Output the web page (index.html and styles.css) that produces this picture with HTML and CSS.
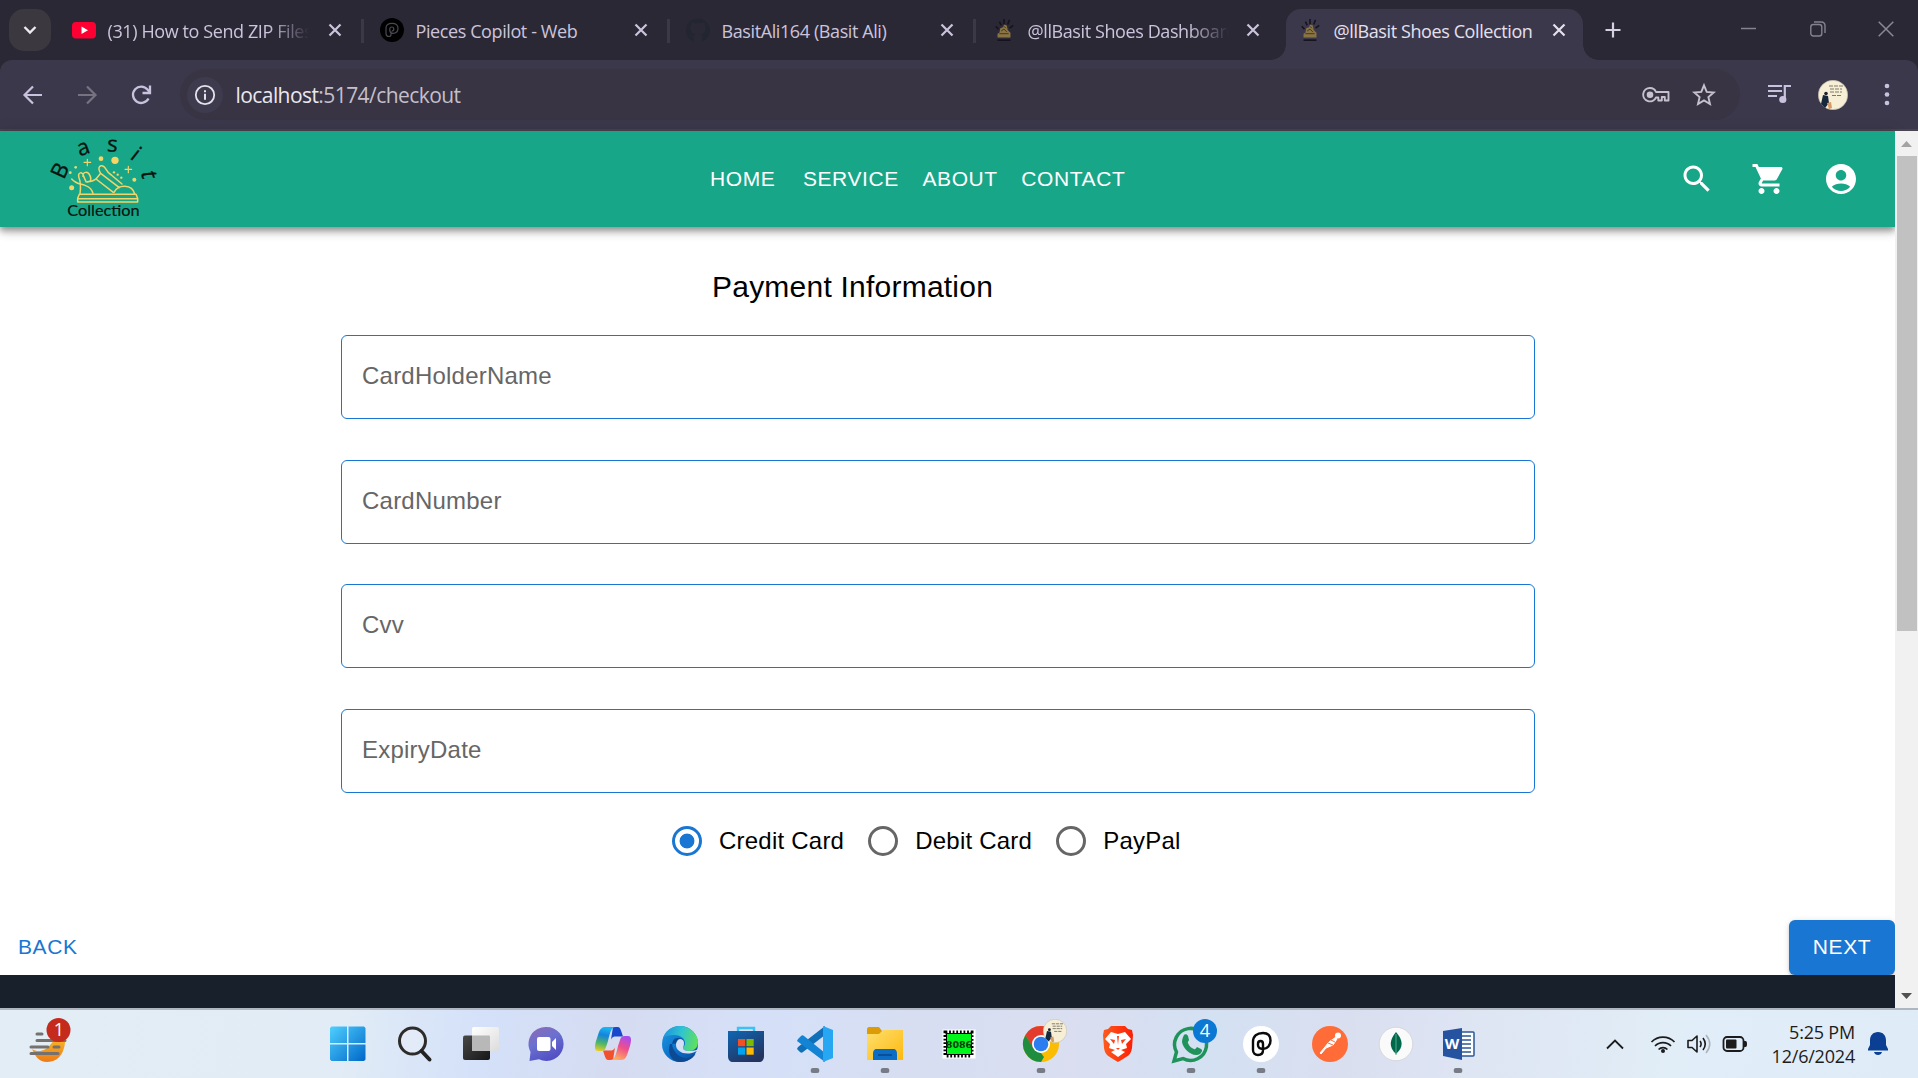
FILE: index.html
```
<!DOCTYPE html>
<html lang="en">
<head>
<meta charset="utf-8">
<title>@llBasit Shoes Collection</title>
<link rel="stylesheet" href="styles.css">
</head>
<body>
<svg width="0" height="0" class="defs" aria-hidden="true">
  <defs>
    <linearGradient id="gWin" x1="0" y1="0" x2="1" y2="1"><stop offset="0" stop-color="#4fd0ff"/><stop offset="1" stop-color="#0067c8"/></linearGradient>
    <linearGradient id="gDark" x1="0" y1="0" x2="1" y2="1"><stop offset="0" stop-color="#484848"/><stop offset="1" stop-color="#161616"/></linearGradient>
    <linearGradient id="gLight" x1="0" y1="0" x2="1" y2="1"><stop offset="0" stop-color="#fff"/><stop offset="1" stop-color="#dcdcdc"/></linearGradient>
    <linearGradient id="gChat" x1="0" y1="0" x2=".5" y2="1"><stop offset="0" stop-color="#8f6bb4"/><stop offset=".5" stop-color="#6a70d0"/><stop offset="1" stop-color="#5350c4"/></linearGradient>
    <linearGradient id="gCopA" x1=".3" y1="0" x2=".1" y2="1"><stop offset="0" stop-color="#19b4f0"/><stop offset=".3" stop-color="#1583dd"/><stop offset=".65" stop-color="#4db56a"/><stop offset="1" stop-color="#f2d020"/></linearGradient>
    <linearGradient id="gCopB" x1=".7" y1="0" x2=".3" y2="1"><stop offset="0" stop-color="#a94bf0"/><stop offset=".45" stop-color="#ee4f8a"/><stop offset="1" stop-color="#ffb15c"/></linearGradient>
    <linearGradient id="gEdgeA" x1="0" y1=".3" x2="1" y2=".5"><stop offset="0" stop-color="#1f93dc"/><stop offset=".5" stop-color="#30c4d0"/><stop offset="1" stop-color="#5fe05c"/></linearGradient>
    <linearGradient id="gEdgeB" x1="0" y1="0" x2="1" y2="1"><stop offset="0" stop-color="#1b9de2"/><stop offset=".6" stop-color="#0a69c6"/><stop offset="1" stop-color="#0b4a92"/></linearGradient>
    <linearGradient id="gStore" x1="0" y1="0" x2=".6" y2="1"><stop offset="0" stop-color="#0f66b4"/><stop offset="1" stop-color="#243460"/></linearGradient>
    <linearGradient id="gFold" x1="0" y1="0" x2="1" y2="1"><stop offset="0" stop-color="#ffdf6e"/><stop offset="1" stop-color="#fcb90f"/></linearGradient>
    <linearGradient id="gBrave" x1="0" y1="0" x2="1" y2="0"><stop offset="0" stop-color="#ff5a1c"/><stop offset="1" stop-color="#fb1f06"/></linearGradient>
    <linearGradient id="gBowl" x1="0" y1="0" x2="0" y2="1"><stop offset="0" stop-color="#f6bf28"/><stop offset="1" stop-color="#ee7a17"/></linearGradient>
    <symbol id="shoe" viewBox="0 0 26 26">
      <g fill="none" stroke="#15131c" stroke-width="1.7"><path d="M4 9l3 3M8 4l2 4M13 1v6M19 2l-2 5M23 8l-4 3"/><path d="M6 24h14"/></g>
      <path d="M6 21v-4l2-1 1-5 3-1 1-3 3 1 1 5 3 3v5z" fill="#8a7443"/><path d="M8 17h10M10 14l3-2 3 3M13 9l2 2" stroke="#3a3232" fill="none"/>
    </symbol>
    <symbol id="close" viewBox="0 0 14 14"><path d="M1.5 1.5l11 11M12.5 1.5l-11 11" stroke="currentColor" stroke-width="2.2" fill="none"/></symbol>
    <symbol id="reader" viewBox="0 0 30 30">
      <circle cx="15" cy="15" r="14.700" fill="#f6efd6" stroke="#b9b6a8" stroke-width=".6"/>
      <path d="M11 6h14M12 9h12M12 12h12M14 15.500h10" stroke="#7d786b" stroke-width="1.200" stroke-dasharray="4 1"/>
      <circle cx="8" cy="13.500" r="1.800" fill="#1c2430"/><path d="M5 15l5 1 1 7-4 5-4-4z" fill="#16283c"/><path d="M9 23l4-1 1 6-3 1z" fill="#d79a62"/>
    </symbol>
    <symbol id="dot" viewBox="0 0 9 5"><rect width="9" height="5" rx="2.500" fill="#777b86"/></symbol>
  </defs>
</svg>

<header class="tabstrip">
  <button class="tab-search"><svg width="14" height="10" viewBox="0 0 14 10"><path d="M1.500 2l5.500 5.500L12.500 2" fill="none" stroke="#eceaf2" stroke-width="2.400"/></svg></button>
  <div class="tabs">
    <div class="tab first">
      <svg class="fav" viewBox="0 0 24 24"><rect y="4" width="24" height="16.500" rx="4" fill="#ff0033"/><path d="M9.500 8.500v7.500l6.500-3.700z" fill="#fff"/></svg>
      <span class="tab-title fade">(31) How to Send ZIP Files</span><svg class="x"><use href="#close"/></svg>
    </div>
    <div class="tab">
      <svg class="fav" viewBox="0 0 24 24"><circle cx="12" cy="12" r="12" fill="#000"/><path d="M9 18.500c-2 0-3-1-3-3V10c0-3 2.500-4.700 6-4.700 3.700 0 6 1.900 6 5s-2.200 5-5.200 5c-2 0-3-1.200-3-3V11c0-1.200.8-2 2-2s2 .8 2 2-.8 2-2 2M9 18.500c1 0 2-.6 2-2v-3" fill="none" stroke="#4a4852" stroke-width="1.200"/></svg>
      <span class="tab-title">Pieces Copilot - Web</span><svg class="x"><use href="#close"/></svg>
    </div>
    <div class="tab">
      <svg class="fav" viewBox="0 0 24 24"><path d="M12 .5C5.400.5 0 5.800 0 12.400c0 5.200 3.400 9.700 8.200 11.300v-4.300c-2.500.3-3.500-.7-4-2.200l-1.300-1.500c1.200-.2 2.200.9 2.700 1.700.8.900 1.800.9 2.700.4.100-.8.500-1.500 1-1.900-2.800-.3-5-1.600-5-5.500 0-1.400.4-2.500 1.200-3.300-.3-.9-.2-2.300.2-3.200 1.500 0 2.600.9 3.300 1.400a12 12 0 016 0c.7-.5 1.800-1.400 3.300-1.400.4.900.5 2.300.2 3.200.8.800 1.200 1.900 1.200 3.300 0 3.900-2.200 5.200-5 5.500.7.600 1.100 1.500 1.100 2.700v5.100A12 12 0 0024 12.400C24 5.800 18.600.5 12 .5z" fill="#222631"/></svg>
      <span class="tab-title">BasitAli164 (Basit Ali)</span><svg class="x"><use href="#close"/></svg>
    </div>
    <div class="tab">
      <svg class="fav"><use href="#shoe"/></svg>
      <span class="tab-title fade">@llBasit Shoes Dashboard</span><svg class="x"><use href="#close"/></svg>
    </div>
    <div class="tab active">
      <svg class="fav"><use href="#shoe"/></svg>
      <span class="tab-title">@llBasit Shoes Collection</span><svg class="x"><use href="#close"/></svg>
    </div>
  </div>
  <svg class="plus" width="16" height="16" viewBox="0 0 16 16"><path d="M8 .5v15M.5 8h15" stroke="#d5d0e2" stroke-width="2.200"/></svg>
  <div class="window-buttons">
    <svg width="16" height="16" viewBox="0 0 16 16"><path d="M0 7.500h15" stroke="#85828e" stroke-width="1.500"/></svg>
    <svg width="16" height="16" viewBox="0 0 16 16"><rect x=".8" y="3.500" width="11" height="11.500" rx="2.500" fill="none" stroke="#85828e" stroke-width="1.400"/><path d="M4 1h7.500a3.500 3.500 0 013.500 3.500V12" fill="none" stroke="#85828e" stroke-width="1.400"/></svg>
    <svg width="16" height="16" viewBox="0 0 16 16"><path d="M.7.700l14.600 14.600M15.300.700L.7 15.300" stroke="#8b8894" stroke-width="1.500"/></svg>
  </div>
</header>

<div class="toolbar-frame">
<div class="toolbar">
  <div class="nav-buttons">
    <svg width="30" height="30" viewBox="0 0 30 30"><path d="M24 15H7M15 6.500L6.500 15l8.500 8.500" fill="none" stroke="#c9c2de" stroke-width="2.200"/></svg>
    <svg width="30" height="30" viewBox="0 0 30 30"><path d="M6 15h17M15 6.500l8.500 8.500-8.500 8.500" fill="none" stroke="#77727f" stroke-width="2.200"/></svg>
    <svg width="30" height="30" viewBox="0 0 30 30"><path d="M22.500 18.500A8.200 8.200 0 1121.500 9.500l2 2.500" fill="none" stroke="#c9c2de" stroke-width="2.300"/><path d="M24 5.500V13h-7.500" fill="none" stroke="#c9c2de" stroke-width="2.300"/></svg>
  </div>
  <div class="omnibox">
    <span class="site-info"><svg width="22" height="22" viewBox="0 0 22 22"><circle cx="11" cy="11" r="9.200" fill="none" stroke="#e6e2ec" stroke-width="1.800"/><path d="M11 9.700v6M11 6.200v2" stroke="#e6e2ec" stroke-width="2"/></svg></span>
    <span class="url"><b>localhost</b>:5174/checkout</span>
    <svg class="key" width="28" height="20" viewBox="0 0 28 20"><path d="M14 7h12.500v8.500h-3.700v-3.500h-3v3.500h-3.500V12.500H14A6.700 6.700 0 118 3c2.800 0 5 1.500 6 4z" fill="none" stroke="#c6c1cc" stroke-width="1.900" stroke-linejoin="round"/><circle cx="8" cy="9.700" r="3.300" fill="#c6c1cc"/></svg>
    <svg width="26" height="26" viewBox="0 0 26 26"><path d="M13 3.300l2.700 6.600 7 .6-5.300 4.600 1.600 7L13 18.400l-6 3.700 1.600-7-5.300-4.600 7-.6z" fill="none" stroke="#c6c1cc" stroke-width="1.900"/></svg>
  </div>
  <svg class="queue" width="26" height="26" viewBox="0 0 26 26"><path d="M2 4h14M2 9h14M2 14h9" stroke="#c9c2de" stroke-width="2.200"/><path d="M18.800 17V4H25" fill="none" stroke="#c9c2de" stroke-width="2.200"/><circle cx="16.800" cy="17.500" r="3.600" fill="#c9c2de"/></svg>
  <svg class="profile" width="30" height="30"><use href="#reader"/></svg>
  <svg class="menu" width="6" height="24" viewBox="0 0 6 24"><g fill="#c9c2de"><circle cx="3" cy="3" r="2.300"/><circle cx="3" cy="11.500" r="2.300"/><circle cx="3" cy="20" r="2.300"/></g></svg>
</div>
</div>

<div class="viewport">
  <div class="page">
    <header class="appbar">
      <svg class="logo" width="150" height="96" viewBox="0 18 450 288">
        <g class="logo-letters">
          <text transform="translate(90 137) rotate(-65)" y="22">B</text>
          <text transform="translate(161 72) rotate(-20)" y="17">a</text>
          <text transform="translate(247 62) rotate(4)" y="18">s</text>
          <text transform="translate(317 88) rotate(38)" y="20">i</text>
          <text transform="translate(355 150) rotate(70) skewX(-14)" y="20">t</text>
        </g>
        <text class="logo-name" x="112" y="273" textLength="217" lengthAdjust="spacingAndGlyphs">Collection</text>
        <g fill="none" stroke="#f3d568" stroke-width="4.500" stroke-linejoin="round" stroke-linecap="round">
          <path d="M148 208h170l5 12v11H143v-11zM146 221h176"/>
          <path d="M125 162c14 16 26 14 40 19 14 5 22 14 24 25"/>
          <path d="M150 206c2-16 4-30-3-48-6-17 12-20 14-4l7 16c12 4 18-4 12-18-6-15-22-12-21 2M172 170c9 0 20-3 26-8l52 40"/>
          <path d="M198 162l14-17c-12-19 0-30 12-18 7 12 12 18 20 23l32 27M212 145l56 43M252 202c12-25 55-26 62 5"/>
          <path d="M172 103v19M162 112h20M295 124v19M285 133h20" stroke-width="3.500"/>
        </g>
        <g fill="#f3d568"><circle cx="213" cy="101" r="7"/><circle cx="255" cy="106" r="11"/><circle cx="137" cy="127" r="4"/><circle cx="121" cy="143" r="4"/><circle cx="125" cy="188" r="7.500"/><circle cx="313" cy="164" r="6"/><circle cx="252" cy="142" r="3.500"/><circle cx="263" cy="149" r="3.500"/><circle cx="274" cy="158" r="3.500"/></g>
      </svg>
      <nav class="site-nav"><a class="home">HOME</a><a>SERVICE</a><a>ABOUT</a><a>CONTACT</a></nav>
      <div class="appbar-icons">
        <svg viewBox="0 0 24 24"><path d="M15.500 14h-.79l-.28-.27C15.410 12.590 16 11.110 16 9.500 16 5.910 13.090 3 9.500 3S3 5.910 3 9.500 5.910 16 9.500 16c1.610 0 3.090-.59 4.230-1.570l.27.28v.79l5 4.990L20.490 19l-4.990-5zm-6 0C7.010 14 5 11.990 5 9.500S7.010 5 9.500 5 14 7.010 14 9.500 11.990 14 9.500 14z"/></svg>
        <svg viewBox="0 0 24 24"><path d="M7 18c-1.100 0-1.990.9-1.990 2S5.900 22 7 22s2-.9 2-2-.9-2-2-2zM1 2v2h2l3.600 7.590-1.350 2.450c-.16.280-.25.610-.25.960 0 1.100.9 2 2 2h12v-2H7.420c-.14 0-.25-.11-.25-.25l.03-.12.9-1.630h7.450c.75 0 1.410-.41 1.750-1.030l3.580-6.490c.08-.14.12-.31.12-.48 0-.55-.45-1-1-1H5.210l-.94-2H1zm16 16c-1.100 0-1.990.9-1.990 2s.89 2 1.990 2 2-.9 2-2-.9-2-2-2z"/></svg>
        <svg viewBox="0 0 24 24"><path d="M12 2C6.480 2 2 6.480 2 12s4.480 10 10 10 10-4.480 10-10S17.520 2 12 2zm0 4c1.930 0 3.500 1.570 3.500 3.500S13.930 13 12 13s-3.500-1.570-3.500-3.500S10.070 6 12 6zm0 14c-2.030 0-4.430-.82-6.140-2.880C7.550 15.800 9.680 15 12 15s4.450.8 6.140 2.120C16.430 19.180 14.030 20 12 20z"/></svg>
      </div>
    </header>
    <main class="payment">
      <h1>Payment Information</h1>
      <div class="fields">
        <div class="field">CardHolderName</div>
        <div class="field">CardNumber</div>
        <div class="field">Cvv</div>
        <div class="field">ExpiryDate</div>
      </div>
      <div class="methods">
        <div class="method"><span class="radio checked"></span>Credit Card</div>
        <div class="method"><span class="radio"></span>Debit Card</div>
        <div class="method"><span class="radio"></span>PayPal</div>
      </div>
    </main>
    <div class="actions"><a class="back">BACK</a><a class="next">NEXT</a></div>
    <footer class="site-footer"></footer>
  </div>
  <div class="scrollbar">
    <svg width="11" height="6" viewBox="0 0 11 6"><path d="M0 6L5.500 0 11 6z" fill="#a3a3a3"/></svg>
    <div class="thumb"></div>
    <svg class="down" width="11" height="6" viewBox="0 0 11 6"><path d="M0 0l5.500 6L11 0z" fill="#505050"/></svg>
  </div>
</div>

<footer class="taskbar">
  <svg class="weather" width="50" height="50" viewBox="0 0 50 50">
    <path d="M10 31c6 4 14 2 19-5 5-6 8-10 14-8 1 11-3 26-18 26-8 0-12-6-15-13z" fill="url(#gBowl)"/>
    <path d="M15 16h5M15 22.500h28M9 29h17M32 29h5M9 35.500h27" stroke="#75716e" stroke-width="3" stroke-linecap="round"/>
    <circle cx="36.500" cy="12" r="12" fill="#c42b1c"/><text x="37" y="18" class="badge-text">1</text>
  </svg>
  <div class="apps">
    <svg viewBox="0 0 40 40"><path d="M3.500 2.500H19V19H2V4zM20.500 2.500H36L37.500 4v15h-17zM2 20.500h17V37H3.500L2 35.500zM20.500 20.500h17v15L36 37H20.500z" fill="url(#gWin)"/></svg>
    <svg viewBox="0 0 40 40"><circle cx="17.500" cy="17" r="13" fill="#e9eff8" fill-opacity=".5" stroke="#2e2c2b" stroke-width="3"/><path d="M26.500 27l8 8.500" stroke="#222" stroke-width="4" stroke-linecap="round"/></svg>
    <svg viewBox="0 0 40 40"><rect x="2" y="11.500" width="27" height="24.500" rx="2" fill="url(#gDark)"/><rect x="11" y="3" width="27" height="24" rx="1.500" fill="url(#gLight)"/><path d="M11 11.500h17a1 1 0 011 1V27H12a1 1 0 01-1-1z" fill="#b8b8b8"/></svg>
    <svg viewBox="0 0 40 40"><path d="M20 3a17 17 0 11-7 32.200L3.500 37l1-9A17 17 0 0120 3z" fill="url(#gChat)"/><rect x="11" y="13" width="13.500" height="14" rx="2" fill="#fff"/><path d="M26 18l4-4v12l-4-4z" fill="#fff"/></svg>
    <svg viewBox="0 0 40 40"><path d="M20 3h5c2 0 3 3 5 9.500h-7c-2 0-4 .5-5 3z" fill="#1748cc"/><path d="M20 36h-5c-2 0-3-3-5-9.500h7c2 0 4-.5 5-3z" fill="#f2512e"/><path d="M12 3H23C18 3 17 9 15 17L13 23C12 26 11 27 8 27H5C2 27 1 24 3 17L6 8C7 5 9 3 12 3z" fill="url(#gCopA)"/><path d="M28 36H17C22 36 23 30 25 22L27 16C28 13 29 12 32 12H35C38 12 39 15 37 22L34 31C33 34 31 36 28 36z" fill="url(#gCopB)"/></svg>
    <svg viewBox="0 0 40 40"><circle cx="20" cy="20" r="18" fill="url(#gEdgeB)"/><path d="M3 14C6 6 12 2 20 2c10 0 18 8 18 16 0 6-4 9-9 9-3 0-6-1-6-3 0-1 2-2 2-5 0-5-5-8-11-8-5 0-9 1-11 3z" fill="url(#gEdgeA)"/><path d="M24 19c0-4-3-5-6-5-5 0-7 5-5 10 3 8 12 13 19 8 4-3 4-2 2 0-4 5-10 6-15 6C11 37 7 28 10 20z" fill="#0c4b93"/><path d="M24 19c0-3-2-4-4-4s-4 3-4 6c0 6 7 10 16 8 3-.6 6-3 8-3v-2c-2 2-6 3-11 3-3 0-6-1-6-3 0-1 1-2 1-5z" fill="#d4def5"/></svg>
    <svg viewBox="0 0 40 40"><path d="M12 8V4h16v4" fill="none" stroke="#3bc2f4" stroke-width="2.400"/><path d="M2 7h36v25c0 4-2 6-5 6H7c-3 0-5-2-5-6z" fill="url(#gStore)"/><path d="M12 15h7.200v7.200H12z" fill="#f25022"/><path d="M20.500 15h7.200v7.200h-7.200z" fill="#7fba00"/><path d="M12 23.500h7.200v7.200H12z" fill="#00a4ef"/><path d="M20.500 23.500h7.200v7.200h-7.200z" fill="#ffb900"/></svg>
    <svg viewBox="0 0 40 40"><path d="M2 25l3 3c1 1 2 1 3 0L30 11V2L3 23z" fill="#0f6fb8"/><path d="M3 15l3-3c1-1 2-1 3 0l21 17v9L2 17z" fill="#1384d4"/><path d="M28 2l10 4v28l-10 4z" fill="#27a7f2"/><use href="#dot" x="15.500" y="44" width="9" height="5"/></svg>
    <svg viewBox="0 0 40 40"><path d="M2 5c0-1 1-2 2-2h10l3 4v6H2z" fill="#dd9c06"/><path d="M2 10h12l4-4h20v30H2z" fill="url(#gFold)"/><path d="M8 36V30c0-3 1-5 4-5h16c3 0 4 2 4 5v6z" fill="#0d6cc4"/><path d="M13 31h14" stroke="#084f98" stroke-width="2"/><use href="#dot" x="15.500" y="44" width="9" height="5"/></svg>
    <svg viewBox="0 0 40 40"><path d="M3.500 5.500h33v29h-33z" fill="#fff"/><rect x="6.500" y="8.500" width="26" height="23" fill="none" stroke="#000" stroke-width="4" stroke-dasharray="1.800 1.800"/><path d="M7.500 9.500h25v21h-25z" fill="#00f51a" stroke="#000"/><text x="20" y="24" class="chip-text">8086</text></svg>
    <svg viewBox="0 0 40 40"><circle cx="20" cy="20" r="18" fill="#fbbc04"/><path d="M20 2a18 18 0 0115.600 9H20v9l-6.500 7L4.400 11A18 18 0 0120 2z" fill="#e33b2e"/><path d="M4.400 11L13 25l7 4 3 4-3 5A18 18 0 014.400 11z" fill="#1e8e3e"/><circle cx="20" cy="20" r="9" fill="#fff"/><circle cx="20" cy="20" r="7.300" fill="#2b7df0"/><use href="#reader" x="22" y="-5" width="24" height="24"/><use href="#dot" x="15.500" y="44" width="9" height="5"/></svg>
    <svg viewBox="0 0 40 40"><path d="M13 2h14l3 3 4 1 1 5-1 13c-1 7-4 8-14 14C10 32 7 31 6 24L5 11l1-5 4-1z" fill="url(#gBrave)"/><path d="M13 8l7 2 7-2 6 7-5 5 1 4-6 2 4 2-7 5-7-5 4-2-6-2 1-4-5-5z" fill="#fff"/><path d="M12 15l5 1-1 4zM28 15l-5 1 1 4zM18 24l2 2 2-2zM19 12l1 9 1-9z" fill="#fb4320"/></svg>
    <svg viewBox="0 0 40 40"><path d="M3 37l2.500-9A16 16 0 1112 34.500z" fill="none" stroke="#20935b" stroke-width="3.500"/><path d="M13 11c1-1 3-1 4 1l1 4c0 1-2 2-1 3 1 3 3 5 6 6 1 1 2-1 3-2l4 2c2 1 1 3-1 5-7 4-17-5-18-12 0-3 1-5 2-7z" fill="#20935b"/><circle cx="34" cy="7" r="12" fill="#0b78d4"/><text x="34" y="13" class="badge-text">4</text><use href="#dot" x="15.500" y="44" width="9" height="5"/></svg>
    <svg viewBox="0 0 40 40"><circle cx="20" cy="20" r="18" fill="#fff"/><path d="M22 9c5 0 7.500 3 7.500 7.500S26.500 25 22 25c-3 0-5-1-5-4v-1c0-2 1-3 2.500-3S22 18 22 20v6c0 3-2 5-5 5s-5-2-5-5V18c0-6 4-9 10-9z" fill="none" stroke="#0a0a0a" stroke-width="2.400"/><use href="#dot" x="15.500" y="44" width="9" height="5"/></svg>
    <svg viewBox="0 0 40 40"><circle cx="20" cy="20" r="18" fill="#ff6c37"/><path d="M10 29l9-11 7-5 1 2-4 6-7 3-5 6z" fill="#fff" stroke="#fff"/><circle cx="28" cy="11.500" r="3" fill="#fff"/><path d="M18 19l5 2M21 16l4 2" stroke="#ff6c37"/></svg>
    <svg viewBox="0 0 40 40"><circle cx="20" cy="20" r="16.800" fill="#fafafa" stroke="#d5d8dc"/><path d="M20 8c7 8 8 15 0 22-8-7-6-15 0-22z" fill="#00684a"/><path d="M20 10v21" stroke="#58a88d" stroke-width="1"/></svg>
    <svg viewBox="0 0 40 40"><rect x="19" y="8" width="17" height="24" rx="1" fill="#fff" stroke="#2b579a" stroke-width="1.500"/><path d="M24 12h9M24 16h9M24 20h9M24 24h9M24 28h9" stroke="#2b579a" stroke-width="1.300"/><path d="M5 7l19-3v32L5 32z" fill="#2653a0"/><text x="14" y="25" class="word-text">W</text><use href="#dot" x="15.500" y="44" width="9" height="5"/></svg>
  </div>
  <div class="tray">
    <svg class="chevron" width="18" height="12" viewBox="0 0 18 12"><path d="M1 10.500l8-8 8 8" fill="none" stroke="#1c1c1c" stroke-width="1.800"/></svg>
    <svg class="wifi" width="26" height="20" viewBox="0 0 26 20"><g fill="none" stroke="#1c1c1c" stroke-width="1.700"><path d="M1.500 8a16 16 0 0123 0M5 12a11 11 0 0116 0M8.600 15.500a6 6 0 018.800 0"/></g><circle cx="13" cy="17" r="2" fill="#1c1c1c"/></svg>
    <svg class="sound" width="26" height="22" viewBox="0 0 26 22"><g fill="none" stroke="#1c1c1c" stroke-width="1.600"><path d="M2 7.500h4L11 3v16l-5-4.500H2z" stroke-linejoin="round"/><path d="M14 8c1.500 2 1.500 4 0 6M17 5c3 4 3 8 0 12"/></g><path d="M20 2c5 6 5 12 0 18" fill="none" stroke="#a9b3bb" stroke-width="1.500"/></svg>
    <svg class="battery" width="26" height="18" viewBox="0 0 26 18"><rect x="1.500" y="2" width="20" height="14" rx="3.500" fill="none" stroke="#1c1c1c" stroke-width="1.800"/><rect x="4" y="4.500" width="10.500" height="9" rx="1" fill="#1c1c1c"/><path d="M22 6h1.500c1 0 1.500 1 1.500 3s-.5 3-1.500 3H22z" fill="#1c1c1c"/></svg>
    <div class="clock"><span>5:25 PM</span><span>12/6/2024</span></div>
    <svg class="bell" width="20" height="24" viewBox="0 0 20 24"><path d="M10 0c5 0 8 3.500 8 8.500V13l2 4v1.500H0V17l2-4V8.500C2 3.500 5 0 10 0zM6 20h8c-.5 2-2 3-4 3s-3.500-1-4-3z" fill="#0a3f94"/></svg>
  </div>
</footer>
</body>
</html>
```
FILE: styles.css
```
* { box-sizing: border-box; }
body {
  margin: 0;
  width: 1918px;
  height: 1078px;
  overflow: hidden;
  display: flex;
  flex-direction: column;
  background: #fff;
  font-family: "Liberation Sans", Arial, sans-serif;
}
svg { display: block; flex: none; }
.defs { position: absolute; }
button { border: 0; padding: 0; }

/* Browser tab strip */
.tabstrip {
  height: 60px;
  flex: none;
  display: flex;
  align-items: flex-start;
  background: #2b2836;
  color: #cbc4dc;
  font: 18px "Open Sans", "Noto Sans", sans-serif;
}
.tab-search {
  width: 42px;
  height: 42px;
  margin: 9px 11px 0 9px;
  border-radius: 15px;
  background: #3b393f;
  display: grid;
  place-items: center;
}
.tabs { display: grid; grid-template-columns: repeat(5, 306px); padding-top: 9px; }
.tab {
  position: relative;
  width: 297px;
  height: 51px;
  padding: 0 17px 9px 12px;
  display: flex;
  align-items: center;
}
.tab.first { padding-left: 10px; }
.tab:not(.active):not(:nth-child(4))::after {
  content: "";
  position: absolute;
  right: -5px;
  top: 10px;
  width: 3px;
  height: 24px;
  background: #3b3944;
}
.fav { width: 24px; height: 24px; margin-right: 11.500px; }
.tab .x { width: 14px; height: 14px; margin-left: auto; }
.tab-title {
  width: 201px;
  overflow: hidden;
  white-space: nowrap;
  letter-spacing: -0.4px;
  line-height: 28px;
  padding-top: 2px;
}
.fade { -webkit-mask-image: linear-gradient(90deg, #000 80%, transparent); mask-image: linear-gradient(90deg, #000 80%, transparent); }
.tab.active { background: #3c384c; border-radius: 15px 15px 0 0; color: #e5e0ed; }
.tab.active::before, .tab.active::after {
  content: "";
  position: absolute;
  bottom: 0;
  width: 15px;
  height: 15px;
}
.tab.active::before { left: -15px; background: radial-gradient(circle at 0 0, transparent 14.5px, #3c384c 15px); }
.tab.active::after { right: -15px; background: radial-gradient(circle at 100% 0, transparent 14.5px, #3c384c 15px); }
.plus { margin: 22px 0 0 13px; }
.window-buttons { display: flex; gap: 52.500px; margin: 21px 24px 0 auto; }

/* Address bar */
.toolbar-frame { flex: none; background: #2b2836; }
.toolbar {
  height: 71px;
  display: flex;
  align-items: center;
  background: #3c384c;
  border-bottom: 2px solid #484550;
  border-radius: 12px 12px 0 0;
}
.nav-buttons { display: flex; gap: 24px; padding-left: 18px; width: 180px; }
.omnibox {
  width: 1560px;
  height: 51px;
  border-radius: 26px;
  background: #383444;
  display: flex;
  align-items: center;
  padding: 0 23px 0 7px;
}
.site-info {
  width: 36px;
  height: 36px;
  border-radius: 50%;
  background: #3f3b4e;
  display: grid;
  place-items: center;
}
.url {
  flex: 1;
  padding: 0 0 0 12.500px;
  color: #c4bfca;
  font: 21px "Open Sans", "Noto Sans", sans-serif;
  letter-spacing: -0.57px;
}
.url b { font-weight: 400; color: #eae7ee; }
.key { margin-right: 21px; }
.queue { margin-left: 26px; }
.profile { margin-left: 26px; }
.menu { margin-left: 36px; }

/* Page area */
.viewport { height: 877px; flex: none; display: flex; }
.page { width: 1895px; display: flex; flex-direction: column; }
.appbar {
  height: 96px;
  flex: none;
  display: flex;
  align-items: center;
  background: #18a689;
  box-shadow: 0 3px 6px rgba(0, 0, 0, .3), 0 6px 8px rgba(0, 0, 0, .14), 0 1px 15px rgba(0, 0, 0, .12);
  padding: 0 36px 0 30px;
}
.logo-letters { font: 66px "Open Sans", sans-serif; text-anchor: middle; fill: #07130f; stroke: #07130f; stroke-width: 1; }
.logo-name { font: 47px Lato, sans-serif; fill: #07130f; stroke: #07130f; stroke-width: .5; }
.site-nav {
  display: flex;
  gap: 23.5px;
  margin-left: 530px;
  padding-bottom: 1px;
  color: #fff;
  font-size: 21px;
  letter-spacing: .6px;
}
.home { margin-right: 4px; }
.appbar-icons { display: flex; gap: 36.5px; margin-left: auto; }
.appbar-icons svg { width: 36px; height: 36px; fill: #fff; }
.appbar-icons svg:first-child { margin-right: -1px; }

.payment { width: 1194px; height: 693px; margin-left: 341px; padding-top: 36px; }
h1 {
  margin: 0 0 24px;
  padding-left: 371px;
  font-size: 30px;
  line-height: 48px;
  font-weight: 400;
  letter-spacing: .225px;
}
.fields { display: grid; gap: 40.6px; }
.field {
  height: 84px;
  border: 1px solid #1976d2;
  border-radius: 6px;
  display: flex;
  align-items: center;
  padding: 0 20px 2px;
  color: #666;
  font-size: 24px;
  letter-spacing: .225px;
}
.methods { display: flex; gap: 7.5px; margin: 17px 0 0 314.500px; }
.method {
  display: flex;
  align-items: center;
  height: 63px;
  font-size: 24px;
  letter-spacing: .225px;
}
.radio {
  width: 30px;
  height: 30px;
  margin: 0 17px 0 16.500px;
  border: 3px solid #666;
  border-radius: 50%;
}
.radio.checked { border-color: #1976d2; background: radial-gradient(circle, #1976d2 7px, transparent 7.800px); }
.actions {
  height: 55px;
  display: flex;
  justify-content: space-between;
  align-items: center;
  padding-left: 18px;
  color: #1976d2;
  font-size: 21px;
  letter-spacing: .6px;
}
.back { padding-bottom: 2px; }
.next {
  width: 106px;
  height: 55px;
  line-height: 54px;
  text-align: center;
  color: #fff;
  background: #1976d2;
  border-radius: 6px;
  box-shadow: 0 3px 3px -2px rgba(0, 0, 0, .2), 0 2px 3px rgba(0, 0, 0, .14), 0 1px 7px rgba(0, 0, 0, .12);
}
.site-footer { flex: 1; background: #18202b; }

.scrollbar {
  width: 23px;
  display: flex;
  flex-direction: column;
  align-items: center;
  background: #f1f1f1;
  padding: 10px 0 9px;
}
.thumb { width: 20px; height: 475px; margin-top: 9px; background: #c1c1c1; }
.down { margin-top: auto; }

/* Desktop taskbar */
.taskbar {
  flex: 1;
  display: flex;
  align-items: flex-start;
  border-top: 2px solid #afb6c0;
  background: linear-gradient(97deg, #e2edf5 0, #e1ecf6 18%, #d4e1f9 25%, #d5dcf1 32%, #d5e0f8 40%, #d7def2 47%, #dadef0 56%, #d3e1f3 63%, #dadff0 70%, #dee5f3 77%, #e1edf7 87%, #dfebf7 100%);
  color: #1c1c1c;
  font-family: "Open Sans", "Noto Sans", sans-serif;
}
.weather { margin: 8px 0 0 22px; }
.apps {
  display: grid;
  grid-template-columns: 67px 66px 65px 67px 67px 66px 69px 70px 74px 82px 77px 73px 70px 69px 66px 62px 40px;
  margin: 14px 0 0 255.500px;
}
.apps > svg { width: 40px; height: 40px; overflow: visible; }
.badge-text { font: 18px "Open Sans", sans-serif; fill: #fff; text-anchor: middle; }
.chip-text { font: bold 9.500px "DejaVu Sans", sans-serif; text-anchor: middle; fill: #033b08; }
.word-text { font: bold 15px "Open Sans", sans-serif; text-anchor: middle; fill: #fff; }
.tray { display: flex; align-items: center; height: 68px; margin-left: auto; padding-right: 30px; }
.wifi { margin-left: 26px; }
.sound { margin-left: 10px; }
.battery { margin-left: 10px; }
.clock {
  width: 107px;
  display: flex;
  flex-direction: column;
  align-items: flex-end;
  font-size: 18px;
  line-height: 24px;
  letter-spacing: -.2px;
  padding-bottom: 1px;
}
.bell { margin-left: 13px; }
```
